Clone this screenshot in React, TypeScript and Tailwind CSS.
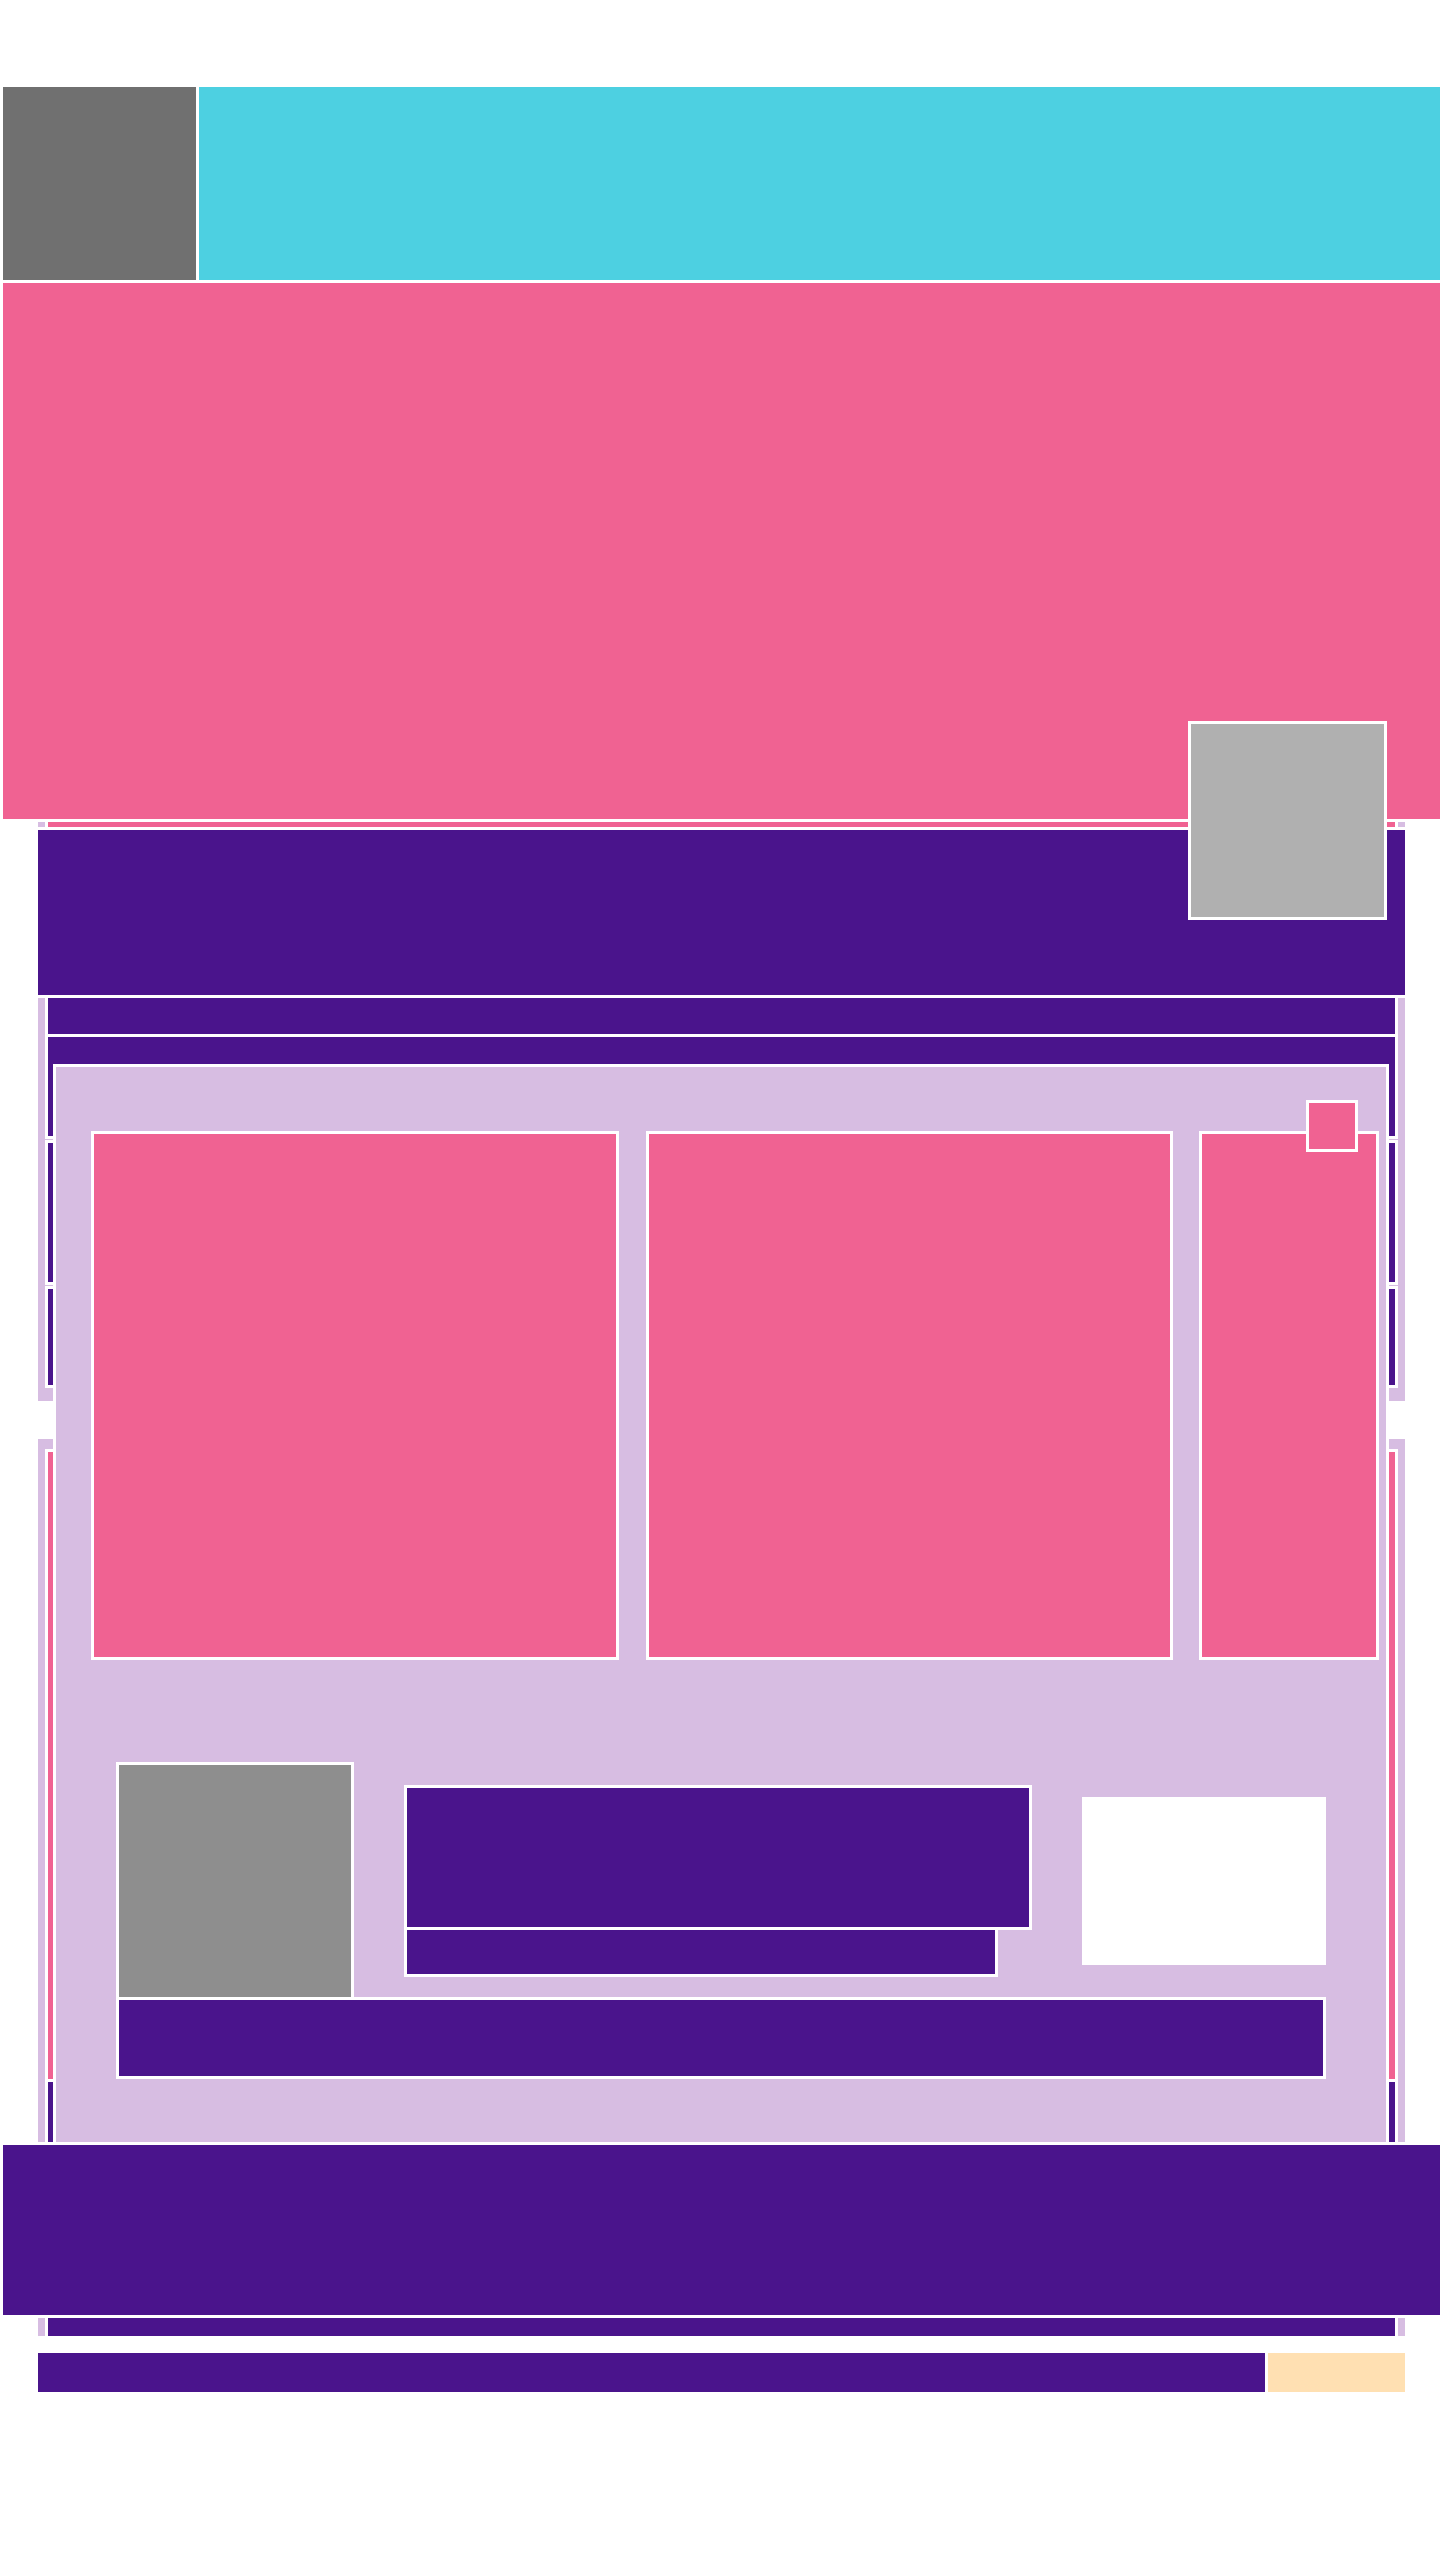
import React from 'react';

const box = 'ring-3 ring-white';
const purple = 'bg-[#4a148c]';
const pink = 'bg-[#f06292]';
const lavender = 'bg-[#d7bde2]';

function Header() {
    return (
        <header className="flex h-[193px] gap-[3px] pl-[3px]">
            <div className={`w-[193px] bg-[#707070] ${box}`} />
            <div className={`flex-1 bg-[#4dd0e1] ${box}`} />
        </header>
    );
}

function ListSection() {
    return (
        <section className={`ml-[38px] mt-[3px] flex w-[1367px] flex-col px-[10px] pb-[16px] ${lavender}`}>
            <div className={`h-[5px] ${pink} ${box}`} />
            <div className={`-mx-[10px] mt-[3px] h-[165px] ${purple} ${box}`} />
            <div className={`mt-[3px] h-[36px] ${purple} ${box}`} />
            <div className={`mt-[3px] h-[99px] ${purple} ${box}`} />
            <div className={`mt-[7px] h-[139px] ${purple} ${box}`} />
            <div className={`mt-[7px] h-[96px] ${purple} ${box}`} />
        </section>
    );
}

function FeedSection() {
    return (
        <section className={`ml-[38px] mt-[38px] flex w-[1367px] flex-col px-[10px] pt-[13px] ${lavender}`}>
            <div className={`h-[627px] ${pink} ${box}`} />
            <div className={`mt-[3px] h-[254px] ${purple} ${box}`} />
        </section>
    );
}

function BottomBar() {
    return (
        <div className="ml-[38px] mt-[17px] flex h-[39px] w-[1367px] gap-[3px]">
            <div className={`w-[1227px] ${purple}`} />
            <div className="flex-1 bg-[#ffe0b2]" />
        </div>
    );
}

function Panel() {
    return (
        <div className={`absolute left-[56px] top-[1067px] flex h-[1075px] w-[1330px] flex-col ${lavender} ${box}`}>
            <div className="ml-[38px] mt-[67px] flex h-[523px]">
                <div className={`w-[522px] ${pink} ${box}`} />
                <div className={`ml-[33px] w-[521px] ${pink} ${box}`} />
                <div className={`ml-[32px] w-[174px] ${pink} ${box}`} />
            </div>
            <div className={`absolute left-[1253px] top-[36px] size-[46px] ${pink} ${box}`} />
            <div className="ml-[63px] mt-[108px] flex w-[1204px] flex-col">
                <div className="flex h-[232px] items-center">
                    <div className={`size-[232px] bg-[#8e8e8e] ${box}`} />
                    <div className="ml-[56px] flex w-[622px] flex-col gap-[3px]">
                        <div className={`h-[139px] ${purple} ${box}`} />
                        <div className={`h-[44px] w-[588px] ${purple} ${box}`} />
                    </div>
                    <div className={`ml-auto h-[162px] w-[238px] bg-white ${box}`} />
                </div>
                <div className={`mt-[3px] h-[76px] ${purple} ${box}`} />
            </div>
        </div>
    );
}

export default function App() {
    return (
        <div className="relative min-h-[2560px] w-[1440px] overflow-hidden bg-white pt-[87px]">
            <Header />
            <section className={`ml-[3px] mt-[3px] h-[536px] ${pink} ${box}`} />
            <ListSection />
            <FeedSection />
            <BottomBar />
            <div className={`absolute left-[1191px] top-[724px] size-[193px] bg-[#b0b0b0] ${box}`} />
            <Panel />
            <div className={`absolute left-[3px] top-[2145px] h-[170px] w-[1437px] ${purple} ${box}`} />
        </div>
    );
}
